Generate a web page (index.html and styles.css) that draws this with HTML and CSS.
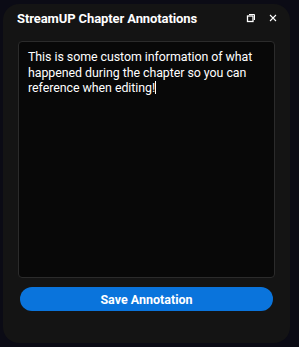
FILE: index.html
```html
<!DOCTYPE html>
<html>
<head>
<meta charset="utf-8">
<link rel="stylesheet" href="styles.css">
</head>
<body>
<div class="window">
  <div class="titlebar">
    <span class="title">StreamUP Chapter Annotations</span>
    <div class="controls">
      <svg class="icon" width="10" height="10" viewBox="0 0 10 10"><rect x="1.5" y="3" width="5.5" height="5.5" fill="none" stroke="#fff" stroke-width="1.3"/><path d="M3 1.5 H8.5 V7" fill="none" stroke="#fff" stroke-width="1"/></svg>
      <svg class="icon" width="10" height="10" viewBox="0 0 10 10"><path d="M2 2 L8 8 M8 2 L2 8" stroke="#fff" stroke-width="1.1"/></svg>
    </div>
  </div>
  <div class="editor">This is some custom information of what happened during the chapter so you can reference when editing!<span class="caret"></span></div>
  <button class="save">Save Annotation</button>
</div>
</body>
</html>
```
FILE: styles.css
```css
html, body {
  margin: 0;
  padding: 0;
  background: #0b0b15;
  width: 299px;
  height: 347px;
  overflow: hidden;
  font-family: Roboto, "Liberation Sans", sans-serif;
}
body {
  padding: 4px 9px 4px 3px;
  box-sizing: border-box;
}
.window {
  background: #141414;
  border-radius: 16px;
  height: 339px;
  box-sizing: border-box;
  padding: 0 15px 0 15px;
  display: flex;
  flex-direction: column;
}
.titlebar {
  display: flex;
  align-items: center;
  justify-content: space-between;
  height: 28px;
}
.title {
  color: #fff;
  font-weight: 700;
  font-size: 13px;
  letter-spacing: -0.1px;
  margin-left: -1px;
}
.controls {
  display: flex;
  gap: 12px;
  align-items: center;
  margin-right: -3px;
}
.icon { display: block; }
.editor {
  margin-top: 9px;
  height: 237px;
  box-sizing: border-box;
  background: #080808;
  border: 1px solid #2b2b2b;
  border-radius: 4px;
  color: #fff;
  font-size: 12.4px;
  letter-spacing: -0.05px;
  line-height: 15.5px;
  padding: 7px 8px 7px 9px;
}
.caret {
  display: inline-block;
  width: 1px;
  height: 13px;
  background: #fff;
  vertical-align: -2px;
}
.save {
  margin: 9px 2px 0 2px;
  height: 24px;
  border: none;
  border-radius: 12px;
  background: #0a74dc;
  color: #fff;
  font-family: Roboto, "Liberation Sans", sans-serif;
  font-weight: 700;
  font-size: 12.5px;
  padding: 0;
}
```
